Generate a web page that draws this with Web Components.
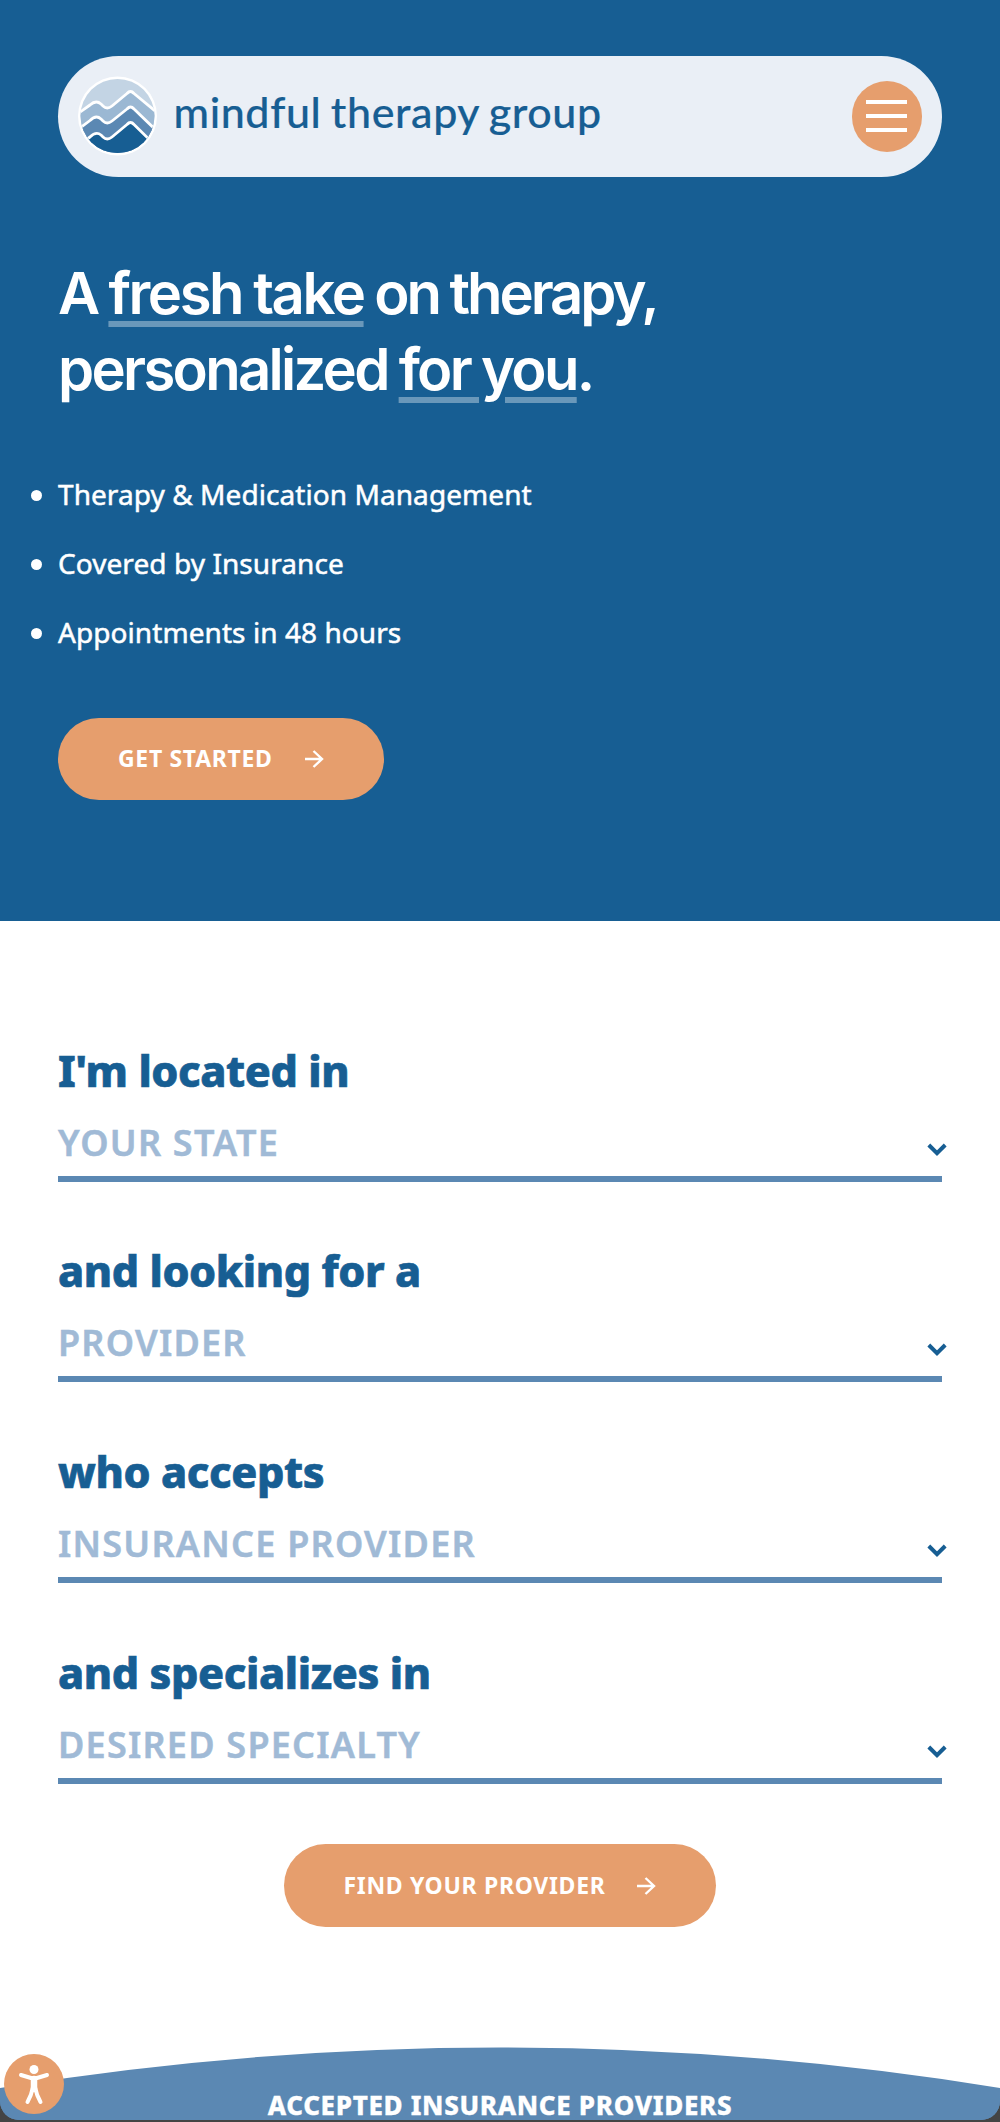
<!DOCTYPE html>
<html lang="en">
<head>
<meta charset="utf-8">
<title>Mindful Therapy Group</title>
<style>
:root {
    --navy: #175e93;
    --steel: #5b88b3;
    --mist: #eaeff6;
    --orange: #e69e6d;
    --pale: #a0bad6;
}
body {
    margin: 0;
    background: #444;
    font-family: "Noto Sans", sans-serif;
}
</style>
</head>
<body>
<mtg-page></mtg-page>

<script>
// attach an open shadow root and fill it
function define(name, html) {
    const template = document.createElement('template')
    template.innerHTML = html

    customElements.define(name, class extends HTMLElement {
        constructor() {
            super()
            this.attachShadow({ mode: 'open' })
            this.shadowRoot.appendChild(template.content.cloneNode(true))
        }
    })
}

define('mtg-logo', `
<style>
:host {
    display: flex;
    align-items: center;
    color: var(--navy);
}
svg {
    display: block;
    width: 80px;
    height: 82px;
}
span {
    margin: -8px 0 0 15.5px;
    font: 500 43px/54px Lato, sans-serif;
    letter-spacing: 0.6px;
    word-spacing: -2px;
    white-space: nowrap;
    -webkit-text-stroke: 0.2px;
}
</style>
<svg viewBox="0 0 80 82">
    <defs><clipPath id="disc"><circle cx="39.500" cy="41" r="37"/></clipPath></defs>
    <circle cx="39.500" cy="41" r="39.500" fill="#fff"/>
    <g clip-path="url(#disc)" stroke="#fff" stroke-width="2.8" stroke-linejoin="round">
        <rect width="80" height="82" fill="#c3d4e4" stroke="none"/>
        <path d="M-2 40L12 30Q18 24.500 23 29L25 31Q29 35 34 31L49 18.500Q52.500 14.500 56 18.500L82 40V90H-2Z" fill="#9bb8d3"/>
        <path d="M-2 56L12 45.500Q18 39.500 23 44L25 46Q29 50 34 46L49 34Q52.500 30 56 34L82 59V90H-2Z" fill="#5b88b3"/>
        <path d="M-2 72L12 62Q18 56 23 60L25 62Q29 66 34 62L49 49.500Q52.500 45.500 56 49.500L82 75V90H-2Z" fill="#175e93"/>
    </g>
</svg>
<span>mindful therapy group</span>
`)

define('mtg-menu-button', `
<style>
:host {
    display: block;
}
button {
    display: flex;
    flex-direction: column;
    align-items: center;
    justify-content: center;
    gap: 10px;
    width: 70.5px;
    height: 70.5px;
    padding: 0;
    border: 0;
    border-radius: 50%;
    background: var(--orange);
}
i {
    width: 41px;
    height: 4px;
    background: #fff;
}
</style>
<button aria-label="Menu"><i></i><i></i><i></i></button>
`)

define('mtg-nav', `
<style>
:host {
    display: flex;
    align-items: center;
    justify-content: space-between;
    box-sizing: border-box;
    height: 120.5px;
    padding: 0 20px;
    border-radius: 61px;
    background: var(--mist);
}
</style>
<mtg-logo></mtg-logo>
<mtg-menu-button></mtg-menu-button>
`)

define('mtg-button', `
<style>
:host {
    display: block;
    width: max-content;
}
button {
    display: flex;
    align-items: center;
    height: 82.5px;
    padding: 0 60px;
    border: 0;
    border-radius: 42px;
    background: var(--orange);
    color: #fff;
    font: 700 23px/32px "Noto Sans", sans-serif;
    letter-spacing: 0.68px;
    text-transform: uppercase;
}
svg {
    margin-left: 32px;
}
slot {
    display: block;
    margin-top: -2px;
}
</style>
<button>
    <slot></slot>
    <svg width="19" height="18" viewBox="0 0 19 18" fill="none" stroke="#fff" stroke-width="2.400"><path d="M0 9H17M8.500 1L17 9L8.500 17"/></svg>
</button>
`)

define('mtg-hero', `
<style>
:host {
    display: block;
    box-sizing: border-box;
    height: 920.5px;
    padding: 56px 58px 0;
    background: var(--navy);
    color: #fff;
}
h1 {
    margin: 78px 0 0;
    font: 600 58px/76.5px Inter, sans-serif;
    letter-spacing: -2.7px;
    word-spacing: -1px;
}
u {
    text-decoration: underline 6px rgba(255, 255, 255, 0.36);
    text-underline-offset: 7px;
}
.loose {
    letter-spacing: -2.45px;
}
.tight {
    letter-spacing: -3.05px;
}
ul {
    display: grid;
    gap: 29px;
    margin: 66.5px 0 65.5px;
    padding: 0;
    list-style: none;
    font-size: 28px;
    line-height: 40px;
    letter-spacing: 0.07px;
    -webkit-text-stroke: 0.5px;
}
li {
    display: flex;
    align-items: center;
}
li::before {
    content: "";
    width: 11px;
    height: 11px;
    margin: 2px 16.5px 0 -27.5px;
    border-radius: 50%;
    background: #fff;
}
</style>
<mtg-nav></mtg-nav>
<h1>A <u class="loose">fresh take</u><span class="tight"> on therapy,</span><br>personalized <u>for you</u>.</h1>
<ul>
    <li>Therapy &amp; Medication Management</li>
    <li>Covered by Insurance</li>
    <li>Appointments in 48 hours</li>
</ul>
<mtg-button>Get started</mtg-button>
`)

define('mtg-field', `
<style>
:host {
    display: block;
    color: var(--navy);
}
.label {
    font-size: 43px;
    font-weight: 800;
    line-height: 58px;
    letter-spacing: -0.4px;
    -webkit-text-stroke: 0.7px;
}
.select {
    display: flex;
    align-items: center;
    justify-content: space-between;
    margin-top: 18px;
    padding-bottom: 8px;
    border-bottom: 6px solid var(--steel);
    color: var(--pale);
    font-size: 36px;
    font-weight: 600;
    line-height: 50px;
    letter-spacing: 1.23px;
    text-transform: uppercase;
    -webkit-text-stroke: 0.5px;
}
svg {
    margin: 14px -5px 0 0;
}
</style>
<div class="label"><slot name="label"></slot></div>
<div class="select">
    <slot></slot>
    <svg width="20" height="14" viewBox="0 0 20 14" fill="none" stroke="#175e93" stroke-width="4"><path d="M1.800 2L10 10.200L18.200 2"/></svg>
</div>
`)

define('mtg-finder', `
<style>
:host {
    display: flex;
    flex-direction: column;
    padding: 121px 58px 120.5px;
}
.fields {
    display: grid;
    gap: 60.8px;
}
mtg-button {
    align-self: center;
    margin-top: 60.4px;
}
</style>
<div class="fields">
    <mtg-field><span slot="label">I'm located in</span>Your state</mtg-field>
    <mtg-field><span slot="label">and looking for a</span>Provider</mtg-field>
    <mtg-field><span slot="label">who accepts</span>Insurance provider</mtg-field>
    <mtg-field><span slot="label">and specializes in</span>Desired specialty</mtg-field>
</div>
<mtg-button>Find your provider</mtg-button>
`)

define('mtg-insurance', `
<style>
:host {
    display: block;
}
svg {
    display: block;
}
h2 {
    margin: 0;
    padding-top: 2px;
    background: var(--steel);
    color: #fff;
    font-size: 26px;
    font-weight: 800;
    line-height: 30px;
    letter-spacing: 0.66px;
    text-align: center;
    text-transform: uppercase;
    -webkit-text-stroke: 0.3px;
}
</style>
<svg width="1000" height="41" viewBox="0 0 1000 41"><path d="M0 41Q500 -40 1000 41Z" fill="#5b88b3"/></svg>
<h2>Accepted insurance providers</h2>
`)

define('mtg-access', `
<style>
:host {
    display: block;
}
svg {
    display: block;
}
</style>
<svg width="60" height="60" viewBox="0 0 60 60">
    <circle cx="30" cy="30" r="30" fill="#e69e6d"/>
    <circle cx="30" cy="15.500" r="4.500" fill="#fff"/>
    <g fill="none" stroke="#fff" stroke-width="4" stroke-linecap="round" stroke-linejoin="round">
        <path d="M17 21L27 24H33L43 21"/>
        <path d="M30 25V35" stroke-width="6.500"/>
        <path d="M28.700 34Q27.500 41 23.500 48M31.300 34Q32.500 41 36.500 48"/>
    </g>
</svg>
`)

define('mtg-page', `
<style>
:host {
    display: block;
    position: relative;
    height: 2120px;
    margin-bottom: 2px;
    overflow: hidden;
    border-radius: 0 0 19px 19px;
    background: linear-gradient(#fff 2100px, var(--steel) 2100px);
}
/* floats over the page content */
mtg-access {
    position: absolute;
    left: 4px;
    bottom: 6px;
}
</style>
<mtg-hero></mtg-hero>
<mtg-finder></mtg-finder>
<mtg-insurance></mtg-insurance>
<mtg-access></mtg-access>
`)
</script>
</body>
</html>
